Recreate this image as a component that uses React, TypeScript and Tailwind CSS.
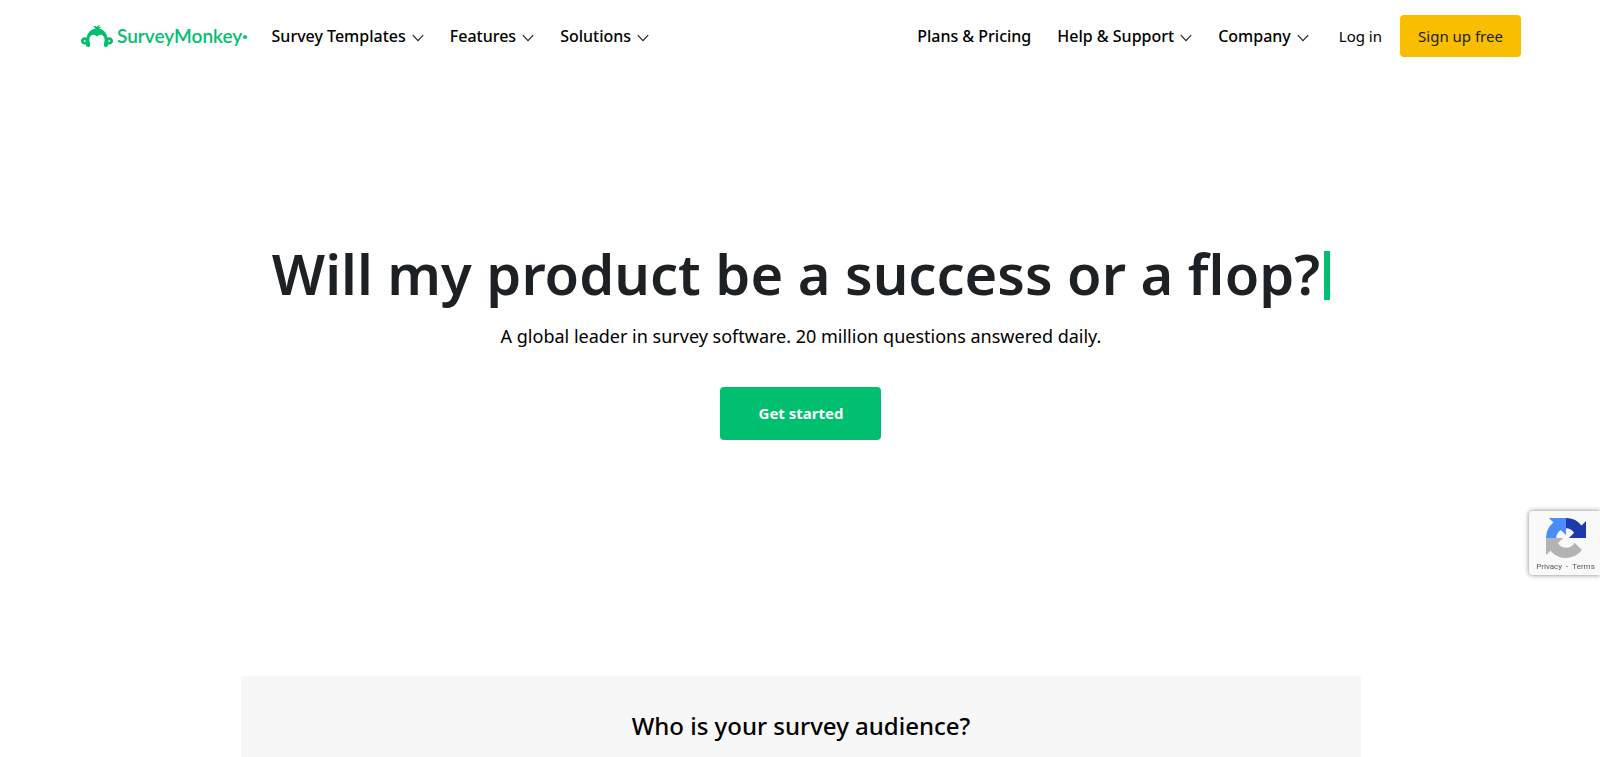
import type { ReactNode } from "react";

function MonkeyMark() {
  return (
    <svg viewBox="0 0 96 66" className="h-[22px] w-8 shrink-0" fill="#00bf6f" aria-hidden="true">
      <path d="M17 38C19 23 29 13 43 11C42 7 40 6 36 5C41 2 46 3 48 6C49 3 52 0 58 0C55 3 53 5 53 7L61 5C59 8 57 10 54 11C68 13 77 23 79 38C88 35 96 40 96 48C96 56 89 60 82 58C81 67 72 68 69 62C67 56 71 51 71 45C71 35 66 29 59 29C53 29 50 32 48 35C46 32 43 29 37 29C30 29 25 35 25 45C25 51 29 56 27 62C24 68 15 67 14 58C7 60 0 56 0 48C0 40 8 35 17 38Z" />
      <circle cx="11" cy="48" r="3" fill="#fff" />
      <circle cx="85" cy="48" r="3" fill="#fff" />
    </svg>
  );
}

function Chevron() {
  return (
    <svg viewBox="0 0 12 8" className="mt-1 h-2 w-3 shrink-0" fill="none" stroke="#222" strokeWidth="1.2" aria-hidden="true">
      <path d="M0.8 1.2L6 6.6L11.2 1.2" />
    </svg>
  );
}

function MenuButton({ children }: { children: ReactNode }) {
  return (
    <button type="button" className="flex items-center gap-1.5 whitespace-nowrap">
      {children}
      <Chevron />
    </button>
  );
}

function Recaptcha() {
  return (
    <aside className="fixed top-[511px] right-0 flex h-16 w-[71px] flex-col items-center rounded-l-sm bg-[#f9f9f9] pt-[7px] pl-0.5 shadow-[0_0_5px_#808080]">
      <svg viewBox="0 0 64 64" className="h-10 w-10 shrink-0" aria-hidden="true">
        <path fill="#1c3aa9" d="M64 32V4.700l-7.200 7.100A32 32 0 0 0 32 0V16.300c5.500 0 10.300 3 13 7.300L36.700 32Z" />
        <path fill="#4a8df8" d="M32 0H4.700l7.100 7.200A32 32 0 0 0 0 32H16.300c0-5.500 3-10.300 7.300-13L32 27.300Z" />
        <path fill="#b3b3b3" d="M0 32v27.300l7.200-7.100A32 32 0 0 0 57.500 51.300L45.700 39.500C41 49 26.500 51 19 40.400L27.300 32Z" />
      </svg>
      <div className="flex gap-1 pt-[3px] text-[8px] leading-3 whitespace-nowrap text-[#555] [font-family:Roboto,sans-serif]">
        <a href="#privacy">Privacy</a>
        <span>-</span>
        <a href="#terms">Terms</a>
      </div>
    </aside>
  );
}

export default function App() {
  return (
    <div className="flex min-h-screen flex-col bg-white pl-0.5 text-black [font-family:'Noto_Sans',sans-serif]">
      <header className="flex h-[72px] items-center justify-between px-[79px]">
        <div className="flex items-center gap-6">
          <a href="#home" className="flex items-center gap-1 text-[19px] font-semibold text-[#00bf6f] [font-family:Lato,sans-serif]">
            <MonkeyMark />
            <span className="whitespace-nowrap">
              SurveyMonkey<span className="font-black">·</span>
            </span>
          </a>
          <nav className="flex items-center gap-[26px] text-base leading-6 font-medium" aria-label="Product">
            <MenuButton>Survey Templates</MenuButton>
            <MenuButton>Features</MenuButton>
            <MenuButton>Solutions</MenuButton>
          </nav>
        </div>
        <div className="flex items-center gap-7 text-base">
          <nav className="flex items-center gap-[26px] font-medium" aria-label="Company">
            <a href="#pricing" className="whitespace-nowrap">Plans &amp; Pricing</a>
            <MenuButton>Help &amp; Support</MenuButton>
            <MenuButton>Company</MenuButton>
          </nav>
          <div className="flex items-center gap-[18px] pl-0.5 text-[15px]">
            <a href="#login" className="whitespace-nowrap">Log in</a>
            <a href="#signup" className="flex h-[42px] w-[121px] items-center justify-center rounded-sm bg-[#f9be00] whitespace-nowrap text-[#1e2124]">
              Sign up free
            </a>
          </div>
        </div>
      </header>
      <main className="flex grow flex-col items-center">
        <section className="flex flex-col items-center pt-[168px] pb-[236px] text-center">
          <h1 className="flex items-center gap-1 text-[56px] leading-[66px] font-semibold text-[#1e2124]">
            Will my product be a success or a flop?
            <span className="mt-1 h-[49px] w-1.5 bg-[#00bf6f]" />
          </h1>
          <p className="pt-4 text-lg leading-7">A global leader in survey software. 20 million questions answered daily.</p>
          <a href="#start" className="mt-[37px] flex h-[53px] w-[161px] items-center justify-center rounded-sm bg-[#00bf6f] text-[15px] font-bold text-white">
            Get started
          </a>
        </section>
        <section className="flex w-full max-w-[1120px] grow flex-col items-center bg-[#f7f7f7] pt-8">
          <h2 className="text-2xl leading-9 font-medium">Who is your survey audience?</h2>
        </section>
      </main>
      <Recaptcha />
    </div>
  );
}
